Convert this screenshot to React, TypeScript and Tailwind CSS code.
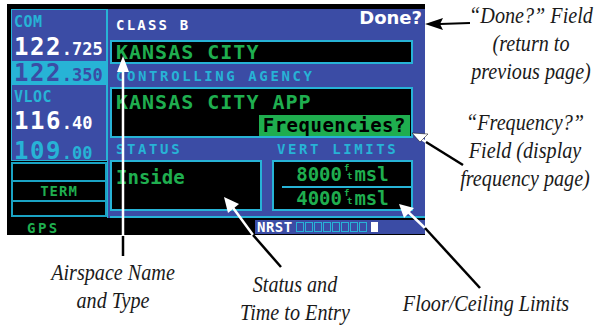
import React from 'react';

const mono = "font-['DejaVu_Sans_Mono',monospace] font-bold";
const serif =
  "font-['Liberation_Serif',serif] italic text-[24px] leading-[28px] text-[#1a1a1a] whitespace-nowrap scale-x-[0.84] text-center";

function Feet() {
  return (
    <span className="inline-flex flex-col text-[9px] leading-[8px] mx-[2px] -translate-y-[2px]">
      <span>f</span>
      <span className="ml-[3px]">t</span>
    </span>
  );
}

function Freq({ big, small, color }: { big: string; small: string; color: string }) {
  return (
    <div className={`${mono} ${color} flex items-baseline pl-[2px] leading-none`}>
      <span className="text-[24px] tracking-[1.5px]">{big}</span>
      <span className="text-[17px]">{small}</span>
    </div>
  );
}

function LeftColumn() {
  return (
    <div className="w-[100px] pl-[4px] flex flex-col">
      <div className="h-[152px] bg-[#3b4ca5] border border-[#27b3d6] flex flex-col">
        <div className={`${mono} text-[#27b3d6] text-[15px] tracking-[0.5px] leading-none pt-[5px] pl-[2px]`}>COM</div>
        <div className="mt-[5px]">
          <Freq big="122" small=".725" color="text-white" />
        </div>
        <div className="mt-[2px] h-[28px] bg-[#27b3d6] flex items-center">
          <Freq big="122" small=".350" color="text-[#3b4ca5]" />
        </div>
        <div className="h-[3px] bg-[#3b4ca5]" />
        <div className="h-[2px] bg-[#27b3d6]" />
        <div className={`${mono} text-[#27b3d6] text-[15px] tracking-[0.5px] leading-none pt-[5px] pl-[2px]`}>VLOC</div>
        <div className="mt-[4px]">
          <Freq big="116" small=".40" color="text-white" />
        </div>
        <div className="mt-[6px]">
          <Freq big="109" small=".00" color="text-[#27b3d6]" />
        </div>
      </div>
      <div className="mt-[1px] flex flex-col border-2 border-[#1aa3c4] bg-black">
        <div className="h-[18px] border-b-2 border-[#1aa3c4]" />
        <div className={`h-[20px] border-b-2 border-[#1aa3c4] flex items-center justify-center ${mono} text-[14px] tracking-[1px] text-[#1fae4f]`}>TERM</div>
        <div className="h-[13px]" />
      </div>
    </div>
  );
}

function MainPanel() {
  return (
    <div className="w-[318px] bg-[#3b4ca5] border-l border-[#27b3d6] flex flex-col pl-[2px]">
      <div className="h-[31px] flex items-end justify-between pb-[8px] pr-[3px]">
        <span className={`${mono} text-white text-[14px] tracking-[2.2px] leading-none ml-[6px]`}>CLASS B</span>
        <span className="font-['DejaVu_Sans',sans-serif] font-bold text-white text-[18px] leading-none -translate-y-[5px]">Done?</span>
      </div>
      <div className="h-[24px] w-[303px] bg-black border-2 border-[#27b3d6] flex items-center pl-[4px]">
        <span className={`${mono} text-[#1fae4f] text-[20px] tracking-[1px] leading-none`}>KANSAS CITY</span>
      </div>
      <div className="h-[23px] flex items-center pl-[6px]">
        <span className={`${mono} text-[#27b3d6] text-[14px] tracking-[2.6px] leading-none`}>CONTROLLING AGENCY</span>
      </div>
      <div className="h-[51px] w-[303px] bg-black border-2 border-[#27b3d6] flex flex-col justify-between">
        <span className={`${mono} text-[#1fae4f] text-[20px] tracking-[1px] leading-none pl-[4px] pt-[3px]`}>KANSAS CITY APP</span>
        <div className="flex justify-end pr-[1px]">
          <span className={`${mono} bg-[#1fae4f] text-black text-[19px] tracking-[0.5px] leading-[21px] px-[4px]`}>Frequencies?</span>
        </div>
      </div>
      <div className="h-[22px] flex items-center">
        <span className={`${mono} text-[#27b3d6] text-[14px] tracking-[2.6px] leading-none w-[162px] pl-[6px]`}>STATUS</span>
        <span className={`${mono} text-[#27b3d6] text-[14px] tracking-[2.6px] leading-none pl-[5px]`}>VERT LIMITS</span>
      </div>
      <div className="flex gap-[10px] h-[51px]">
        <div className="w-[152px] bg-black border-2 border-[#27b3d6] pl-[4px] pt-[4px]">
          <span className={`${mono} text-[#1fae4f] text-[19px] leading-none`}>Inside</span>
        </div>
        <div className="w-[141px] bg-black border-2 border-[#27b3d6] flex flex-col">
          <div className={`h-[24px] flex items-center justify-center ${mono} text-[#1fae4f] text-[19px] leading-none`}>
            <span>8000</span><Feet /><span>msl</span>
          </div>
          <div className="h-[2px] ml-[8px] bg-[#27b3d6]" />
          <div className={`flex-1 flex items-center justify-center ${mono} text-[#1fae4f] text-[19px] leading-none`}>
            <span>4000</span><Feet /><span>msl</span>
          </div>
        </div>
      </div>
      <div className="flex-1 flex flex-col justify-end">
        <div className="h-[2px] bg-[#27b3d6]" />
      </div>
    </div>
  );
}

function BottomBar() {
  return (
    <div className="h-[17px] flex items-center">
      <div className="w-[248px] pl-[20px]">
        <span className={`${mono} text-[#1fae4f] text-[14px] tracking-[2.5px] leading-none`}>GPS</span>
      </div>
      <div className="flex-1 h-[14px] bg-[#3b4ca5] flex items-center pl-[2px] gap-[1px]">
        <span className={`${mono} text-white text-[14px] tracking-[0.5px] leading-none mr-[2px]`}>NRST</span>
        {[0, 1, 2, 3, 4, 5, 6, 7].map((i) => (
          <span key={i} className="w-[8px] h-[10px] border border-[#27b3d6]" />
        ))}
        <span className="w-[7px] h-[10px] bg-white ml-[3px]" />
      </div>
    </div>
  );
}

function Arrows() {
  return (
    <svg className="absolute inset-0" width="594" height="326" viewBox="0 0 594 326">
      {/* Done? */}
      <line x1="440" y1="24" x2="470" y2="23" stroke="black" strokeWidth="2" />
      <polygon points="425,24 443,18 440,24 443,30" fill="black" />
      {/* Frequencies? */}
      <line x1="418" y1="137" x2="426" y2="142" stroke="white" strokeWidth="2.5" />
      <line x1="426" y1="142" x2="463" y2="165" stroke="black" strokeWidth="2.5" />
      <polygon points="412,133 428,134 420,142" fill="white" stroke="black" strokeWidth="0.5" />
      {/* Airspace name */}
      <line x1="123" y1="66" x2="123" y2="236" stroke="white" strokeWidth="2.5" />
      <line x1="123" y1="236" x2="123" y2="256" stroke="black" strokeWidth="2.5" />
      <polygon points="123,56 117,72 129,72" fill="white" />
      {/* Status */}
      <line x1="231" y1="205" x2="253" y2="235" stroke="white" strokeWidth="2.5" />
      <line x1="253" y1="235" x2="281" y2="267" stroke="black" strokeWidth="2.5" />
      <polygon points="224,197 239,204 228,213" fill="white" />
      {/* Floor/Ceiling */}
      <line x1="406" y1="210" x2="425" y2="228" stroke="white" strokeWidth="2.5" />
      <line x1="425" y1="228" x2="480" y2="288" stroke="black" strokeWidth="2.5" />
      <polygon points="399,204 414,208 404,218" fill="white" />
    </svg>
  );
}

export default function App() {
  return (
    <div className="relative w-[594px] h-[326px] bg-white overflow-hidden">
      <div className="ml-[7px] pt-[4px]">
        <div className="w-[418px] h-[231px] bg-black flex flex-col pt-[5px]">
          <div className="flex h-[209px]">
            <LeftColumn />
            <MainPanel />
          </div>
          <BottomBar />
        </div>
      </div>

      <div className={`absolute left-[431px] top-[1px] w-[200px] ${serif}`}>
        <div>“Done?” Field</div>
        <div>(return to</div>
        <div>previous page)</div>
      </div>
      <div className={`absolute left-[425px] top-[108px] w-[200px] ${serif}`}>
        <div>“Frequency?”</div>
        <div>Field (display</div>
        <div>frequency page)</div>
      </div>
      <div className={`absolute left-[13px] top-[258px] w-[200px] ${serif}`}>
        <div>Airspace Name</div>
        <div>and Type</div>
      </div>
      <div className={`absolute left-[195px] top-[270px] w-[200px] ${serif}`}>
        <div>Status and</div>
        <div>Time to Entry</div>
      </div>
      <div className={`absolute left-[366px] top-[289px] w-[240px] ${serif}`}>
        <div>Floor/Ceiling Limits</div>
      </div>

      <Arrows />
    </div>
  );
}
